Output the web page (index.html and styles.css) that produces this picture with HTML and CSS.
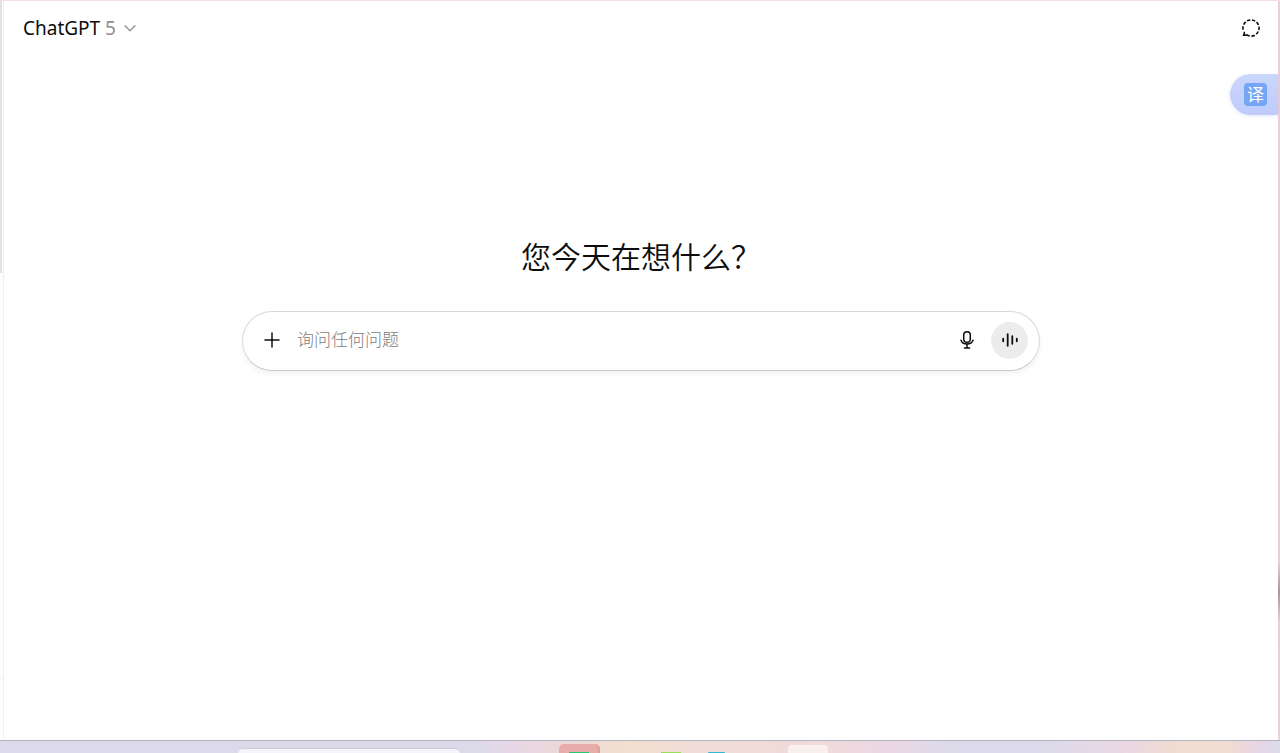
FILE: index.html
```html
<!DOCTYPE html>
<html lang="zh-CN">
<head>
    <meta charset="UTF-8">
    <meta name="viewport" content="width=device-width, initial-scale=1.0">
    <title>ChatGPT</title>
    <link rel="stylesheet" href="styles.css">
</head>
<body>

    <div class="window">
        <!-- Collapsed sidebar edge -->
        <aside class="sidebar">
            <div class="sidebar-thumb"></div>
            <div class="sidebar-footer"></div>
        </aside>

        <div class="page">
            <header class="header">
                <button class="model-button" type="button">
                    <span>ChatGPT <span class="model-version">5</span></span>
                    <svg class="chevron" width="12" height="12" viewBox="0 0 12 12" aria-hidden="true">
                        <path d="M1 3.8 6 8.8l5-5"/>
                    </svg>
                </button>
                <button class="icon-button" type="button" aria-label="临时聊天">
                    <svg class="temp-icon" width="20" height="20" viewBox="0 0 20 20" aria-hidden="true">
                        <path class="temp-ring" d="M2.3 12.5A8.1 8.1 0 1 1 5.24 16.55"/>
                        <path d="M3.3 14.4c.5 1-.1 1.9-.9 2.8 1 .1 1.900 0 2.900-.2"/>
                    </svg>
                </button>
            </header>

            <button class="translate-button" type="button" aria-label="翻译">
                <span class="translate-icon">译</span>
            </button>

            <main class="content">
                <h1>您今天在想什么？</h1>
                <form class="composer">
                    <button class="plain-button" type="button" aria-label="添加">
                        <svg width="16" height="16" viewBox="0 0 16 16" aria-hidden="true">
                            <path d="M8 1v14M1 8h14"/>
                        </svg>
                    </button>
                    <input class="prompt" type="text" placeholder="询问任何问题" aria-label="询问任何问题">
                    <button class="plain-button" type="button" aria-label="听写">
                        <svg width="16" height="20" viewBox="0 0 16 20" aria-hidden="true">
                            <rect x="4.700" y="1.7" width="6.600" height="10.6" rx="3.3"/>
                            <path d="M2 10.3a6.2 5 0 0 0 12 0M8 14.4v3.4M5.4 17.9h5.2"/>
                        </svg>
                    </button>
                    <button class="voice-button" type="button" aria-label="语音模式">
                        <svg class="voice-icon" width="18" height="18" viewBox="0 0 18 18" aria-hidden="true">
                            <path d="M2.2 7.7v2.6M6.7 3.2v11.6M11.300 5.2v7.6M15.8 7.7v2.6"/>
                        </svg>
                    </button>
                </form>
            </main>
        </div>

        <div class="window-edge"></div>
    </div>

    <!-- Top of the desktop taskbar -->
    <footer class="taskbar">
        <span class="task-search"></span>
        <span class="task-app"><span class="task-app-icon"></span></span>
        <span class="task-green"></span>
        <span class="task-blue"></span>
        <span class="task-active"></span>
    </footer>

</body>
</html>
```
FILE: styles.css
```css
* {
    box-sizing: border-box;
}
body {
    display: flex;
    flex-direction: column;
    min-height: 100vh;
    margin: 0;
    background-color: #fff;
    color: #0d0d0d;
    font-family: "Noto Sans", "Noto Sans CJK SC", sans-serif;
}
button, input {
    border: none;
    padding: 0;
    background: none;
    color: inherit;
    font-family: inherit;
}
button {
    cursor: pointer;
}
svg {
    display: block;
    fill: none;
    stroke: currentColor;
    stroke-width: 1.5;
    stroke-linecap: round;
    stroke-linejoin: round;
}
.window {
    display: flex;
    flex: 1;
    border-top: 1px solid #f6dfe4;
}
.window-edge {
    width: 2px;
    background: linear-gradient(#ecd0d8 0%, #e9ccd5 76%, #a893a0 80%, #e9ccd5 84%, #ecd0d8 100%);
}
.sidebar {
    display: flex;
    flex-direction: column;
    width: 4px;
    border-right: 1px solid #f0f0f0;
}
.sidebar-thumb {
    flex: 272;
    width: 2px;
    background-color: #e2e2e2;
}
.sidebar-footer {
    flex: 467;
    background: linear-gradient(#ededed, #ededed) 0 87% / 100% 1px no-repeat;
}
.page {
    position: relative;
    display: flex;
    flex: 1;
    flex-direction: column;
}
.header {
    display: flex;
    justify-content: space-between;
    align-items: center;
    height: 54px;
    padding: 0 17px 0 19px;
}
.model-button {
    display: flex;
    align-items: center;
    gap: 8px;
    font-size: 19px;
    line-height: 28px;
}
.model-version {
    color: #8f8f8f;
}
.chevron {
    color: #8f8f8f;
    stroke-width: 1.3;
}
.temp-icon {
    stroke-width: 1.6;
}
.temp-ring {
    stroke-dasharray: 3.4 1.69;
    stroke-dashoffset: -0.85;
    stroke-linecap: butt;
}
.translate-button {
    position: absolute;
    top: 73px;
    right: 0;
    display: flex;
    align-items: center;
    width: 48px;
    height: 41px;
    padding-left: 14px;
    border-radius: 21px 0 0 21px;
    background: linear-gradient(#c9d6fc, #bfcbfb);
    box-shadow: 0 1px 4px rgba(120, 140, 220, 0.2);
}
.translate-icon {
    width: 23px;
    height: 23px;
    border-radius: 4px;
    background-color: #76a5f5;
    color: #fff;
    font-size: 17px;
    line-height: 23px;
}
.content {
    display: flex;
    flex-direction: column;
    align-items: center;
    padding: 180px 24px 0;
}
h1 {
    margin: 0 0 32px;
    font-size: 30px;
    font-weight: 350;
    line-height: 44px;
}
.composer {
    display: flex;
    align-items: center;
    width: 100%;
    max-width: 798px;
    height: 60px;
    padding: 0 11px 2px 21px;
    border: 1px solid #d9d9d9;
    border-bottom-color: #c9c9c9;
    border-radius: 30px;
    box-shadow: 0 3px 6px rgba(0, 0, 0, 0.05);
}
.prompt {
    flex: 1;
    min-width: 0;
    margin-left: 17px;
    font-size: 17px;
    line-height: 24px;
    outline: none;
}
.prompt::placeholder {
    color: #808080;
    font-weight: 300;
    opacity: 1;
}
.voice-button {
    display: flex;
    justify-content: center;
    align-items: center;
    width: 37px;
    height: 37px;
    margin-left: 16px;
    border-radius: 50%;
    background-color: #ececec;
}
.voice-icon {
    stroke-width: 1.8;
}
.taskbar {
    display: grid;
    grid-template-columns: 238fr 222fr 99fr 41fr 61fr 20fr 27fr 17fr 63fr 40fr 452fr;
    align-items: end;
    height: 13px;
    border-top: 1px solid #b5b3c0;
    background: linear-gradient(90deg, #dcdaea 0%, #dcdaea 37%, #e7d6e7 40%, #ecd8d8 44%, #f3dfce 49%, #f0dcd8 55%, #f0dada 64%, #ead7e5 70%, #dcdaea 74%, #dcdaea 82%, #ead8e3 88%, #f0dcd1 92%, #f0dcd1 96%, #e8d5e5 98%, #dcdaea 100%);
}
.task-search {
    grid-column: 2;
    height: 5px;
    border-top: 1px solid #cfcdd8;
    border-radius: 10px 10px 0 0;
    background-color: #f5f4fa;
}
.task-app {
    display: flex;
    grid-column: 4;
    justify-content: center;
    align-items: end;
    height: 9px;
    border-right: 2px solid #dda0a0;
    border-radius: 5px 5px 0 0;
    background-color: #e8adab;
}
.task-app-icon {
    width: 20px;
    height: 1px;
    background-color: #25c971;
}
.task-green {
    grid-column: 6;
    height: 1px;
    background-color: #9bdc5b;
}
.task-blue {
    grid-column: 8;
    height: 1px;
    border-radius: 4px 4px 0 0;
    background-color: #32b9d2;
}
.task-active {
    grid-column: 10;
    height: 8px;
    border-radius: 4px 4px 0 0;
    background-color: #f9efec;
}
```
